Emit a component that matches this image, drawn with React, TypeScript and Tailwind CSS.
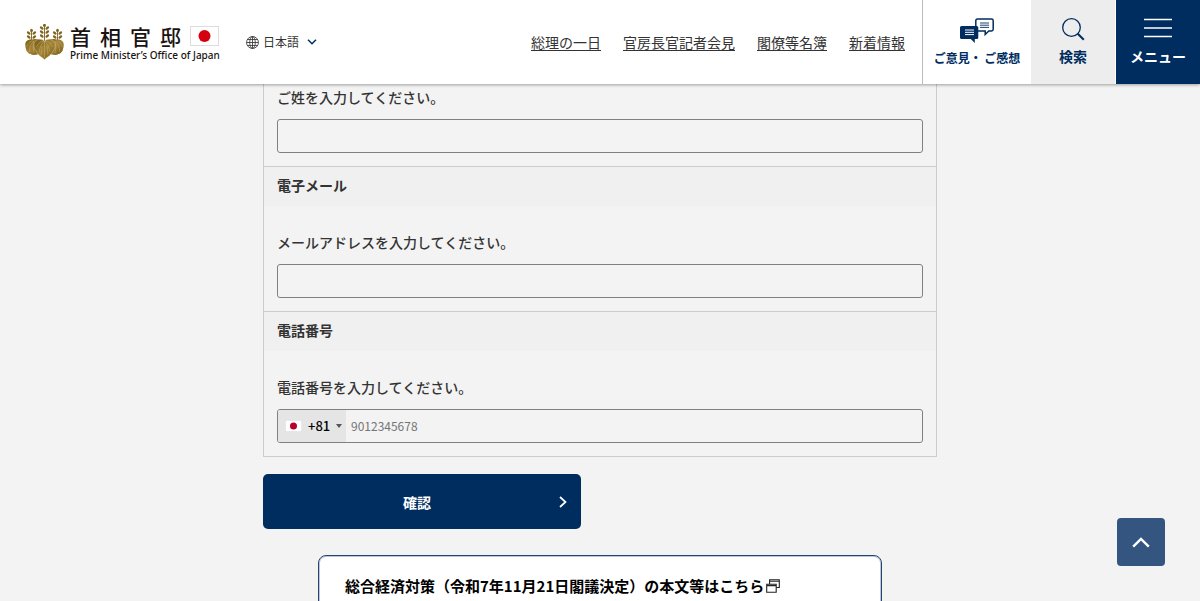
import type { ReactNode } from 'react';

const NAV_LINKS = ['総理の一日', '官房長官記者会見', '閣僚等名簿', '新着情報'];

export default function App() {
  return (
    <div className="h-screen overflow-hidden bg-[#f3f3f3] font-['Noto_Sans_CJK_JP',sans-serif] text-[#333]">
      <Header />

      <main className="px-4">
        <form className="mx-auto max-w-[674px]" onSubmit={(e) => e.preventDefault()}>
          <div className="border border-t-0 border-[#ccc]">
            <div className="px-[13px] pt-px pb-[13px]">
              <Field id="name" label="ご姓を入力してください。">
                <input id="name" type="text" className="h-[34px] w-full rounded-[3px] border border-[#808080] px-2 text-sm" />
              </Field>
            </div>

            <Section title="電子メール">
              <Field id="email" label="メールアドレスを入力してください。">
                <input id="email" type="email" className="h-[34px] w-full rounded-[3px] border border-[#808080] px-2 text-sm" />
              </Field>
            </Section>

            <Section title="電話番号">
              <Field id="tel" label="電話番号を入力してください。">
                <div className="flex h-[34px] overflow-hidden rounded-[3px] border border-[#808080]">
                  <div className="flex w-[68px] items-center bg-[#e5e5e5] pl-[7px]">
                    <Flag className="h-3 w-[17px] shrink-0" fill="#bc002d" />
                    <select
                      aria-label="国番号"
                      className="ml-1.5 w-[26px] appearance-none text-[13px] font-medium text-black"
                    >
                      <option>+81</option>
                    </select>
                    <svg viewBox="0 0 6 4" className="ml-0.5 h-1 w-1.5" fill="#555">
                      <path d="M0 0h6L3 4z" />
                    </svg>
                  </div>
                  <input
                    id="tel"
                    type="tel"
                    placeholder="9012345678"
                    className="min-w-0 flex-1 px-[5px] text-xs placeholder:text-[#757575]"
                  />
                </div>
              </Field>
            </Section>
          </div>

          <button
            type="submit"
            className="mt-[17px] grid h-[55px] w-full max-w-[318px] grid-cols-[1fr_auto_1fr] items-center rounded-[5px] bg-[#002d5f] pr-[14px] pl-1 text-sm font-bold text-white"
          >
            <span className="col-start-2">確認</span>
            <svg viewBox="0 0 8 12" className="h-3 w-2 justify-self-end" fill="none" stroke="currentColor" strokeWidth="1.7">
              <path d="M1 1l5.5 5L1 11" />
            </svg>
          </button>
        </form>

        <div className="mx-auto mt-[26px] max-w-[564px] rounded-lg border border-[#254475] bg-white px-[26px] pt-[18px] pb-6 ring-1 ring-[#254475]/30 ring-inset">
          <a href="#" className="flex items-center gap-0.5 text-[15px] leading-6 font-bold text-black">
            総合経済対策（令和7年11月21日閣議決定）の本文等はこちら
            <svg viewBox="0 0 14 14" className="h-3.5 w-3.5 shrink-0" fill="none" stroke="#222" strokeWidth="1.1">
              <path d="M3.6 5V.8h9.7v7.7h-3M3.6 2.2h9.7" />
              <path d="M.7 5.2h9.5v8H.7zM.7 6.6h9.5" />
            </svg>
          </a>
        </div>
      </main>

      <a
        href="#"
        aria-label="ページの先頭へ"
        className="fixed right-[35px] bottom-[35px] flex h-12 w-12 items-center justify-center rounded bg-[#34557f]"
      >
        <svg viewBox="0 0 18 11" className="h-[11px] w-[18px]" fill="none" stroke="#fff" strokeWidth="2.4">
          <path d="M1.2 9.7L9 2l7.8 7.7" />
        </svg>
      </a>
    </div>
  );
}

function Header() {
  return (
    <header className="relative z-10 flex h-[84px] bg-white shadow-[0_1px_3px_rgba(0,0,0,0.35)]">
      <div className="flex flex-1 items-center pl-[25px]">
        <a href="#" className="flex items-center gap-[6px]">
          <Emblem />
          <div className="w-[149px] pt-px">
            <div className="flex items-center justify-between">
              <div className="flex w-[111px] justify-between text-[21px] leading-6 font-medium text-[#1a1311]">
                <span>首</span>
                <span>相</span>
                <span>官</span>
                <span>邸</span>
              </div>
              <Flag className="h-5 w-[29px]" fill="#d7000f" />
            </div>
            <div className="mt-px font-['Noto_Sans',sans-serif] text-[10px] leading-3 font-medium whitespace-nowrap text-[#1a1311]">
              Prime Minister’s Office of Japan
            </div>
          </div>
        </a>

        <div className="ml-[27px] flex items-center">
          <svg viewBox="0 0 14 14" className="h-[13px] w-[13px]" fill="none" stroke="#333" strokeWidth="0.9">
            <circle cx="7" cy="7" r="6.4" />
            <ellipse cx="7" cy="7" rx="3" ry="6.4" />
            <path d="M7 .6v12.8M.6 7h12.8M1.5 3.8h11M1.5 10.2h11" />
          </svg>
          <select aria-label="言語" className="ml-1 w-10 appearance-none text-xs">
            <option>日本語</option>
          </select>
          <svg viewBox="0 0 10 6" className="ml-1 h-1.5 w-2.5" fill="none" stroke="#002d5f" strokeWidth="1.5">
            <path d="M1 .8l4 4 4-4" />
          </svg>
        </div>

        <nav className="mr-[17px] ml-auto flex gap-[22px] text-sm">
          {NAV_LINKS.map((label) => (
            <a key={label} href="#" className="whitespace-nowrap underline underline-offset-2">
              {label}
            </a>
          ))}
        </nav>
      </div>

      <a
        href="#"
        className="flex w-[109px] flex-col items-center border-l border-[#bbb] pt-[18px] text-xs leading-4 font-bold whitespace-nowrap text-[#002d5f]"
      >
        <svg viewBox="0 0 34 26" className="h-[26px] w-[34px]" fill="none" stroke="#002d5f">
          <path
            d="M17.5 1h14q1.7 0 1.7 1.7v8.6q0 1.7-1.7 1.7h-2.7l-3.6 3.5V13h-7.7q-1.7 0-1.7-1.7V2.7q0-1.7 1.7-1.7z"
            strokeWidth="1.5"
          />
          <path d="M20 5h9M20 7.2h9M20 9.4h9" strokeWidth="0.9" />
          <path
            d="M1.5 8h15.3q1.5 0 1.5 1.5v10q0 1.5-1.5 1.5h-2v4l-4-4H1.5Q0 21 0 19.5v-10Q0 8 1.5 8z"
            fill="#002d5f"
            stroke="none"
          />
          <path d="M5 12h9M5 14.3h9M5 16.6h9" stroke="#fff" />
        </svg>
        <span className="mt-[6px]">ご意見・ ご感想</span>
      </a>

      <button
        type="button"
        className="flex w-[84px] flex-col items-center bg-[#ededed] pt-[17px] text-sm leading-4 font-bold text-[#002d5f]"
      >
        <svg viewBox="0 0 24 24" className="h-6 w-6" fill="none" stroke="currentColor">
          <circle cx="10.5" cy="10.5" r="8.8" strokeWidth="1.3" />
          <path d="M16.8 16.8l6 6" strokeWidth="2" />
        </svg>
        <span className="mt-[7px]">検索</span>
      </button>

      <button
        type="button"
        className="flex w-[85px] flex-col items-center border-l border-white bg-[#002d5f] pt-[18px] text-sm leading-4 font-bold text-white"
      >
        <svg viewBox="0 0 28 20" className="h-5 w-7" stroke="currentColor" strokeWidth="1.5">
          <path d="M0 1.500h28M0 10h28M0 18.500h28" />
        </svg>
        <span className="mt-[10px]">メニュー</span>
      </button>
    </header>
  );
}

function Section({ title, children }: { title: string; children: ReactNode }) {
  return (
    <section className="border-t border-[#ccc]">
      <h2 className="flex h-[39px] items-center bg-[#f0f0f0] px-[13px] pb-[3px] text-sm font-bold">{title}</h2>
      <div className="px-[13px] pt-6 pb-[13px]">{children}</div>
    </section>
  );
}

function Field({ id, label, children }: { id: string; label: string; children: ReactNode }) {
  return (
    <>
      <label htmlFor={id} className="mb-2.5 block text-sm leading-6 font-medium">
        {label}
      </label>
      {children}
    </>
  );
}

function Flag({ className, fill }: { className: string; fill: string }) {
  return (
    <svg viewBox="0 0 29 20" preserveAspectRatio="none" className={className}>
      <rect x="0.5" y="0.5" width="28" height="19" fill="#fff" stroke="#ddd" />
      <circle cx="14.5" cy="10" r="6" fill={fill} />
    </svg>
  );
}

// One upright paulownia stalk: a stem with paired buds and a bud on top.
function Stalk({ x, top, bottom, pairs }: { x: number; top: number; bottom: number; pairs: number }) {
  const rows = Array.from({ length: pairs }, (_, i) => top + 4 + i * 4);
  return (
    <g>
      <path d={`M${x} ${top}V${bottom}`} stroke="#7d6220" strokeWidth="0.9" />
      <ellipse cx={x} cy={top + 1.4} rx="1.4" ry="1.7" />
      {rows.map((y) => (
        <g key={y}>
          <ellipse cx={x - 2.8} cy={y} rx="2.1" ry="1.3" transform={`rotate(35 ${x - 2.8} ${y})`} />
          <ellipse cx={x + 2.8} cy={y} rx="2.1" ry="1.3" transform={`rotate(-35 ${x + 2.8} ${y})`} />
        </g>
      ))}
    </g>
  );
}

function Emblem() {
  return (
    <svg viewBox="0 0 39 36" className="h-9 w-[39px] shrink-0" fill="#80641f">
      <defs>
        <linearGradient id="gold" x1="0" y1="0" x2="1" y2="1">
          <stop offset="0" stopColor="#745712" />
          <stop offset="0.5" stopColor="#a58639" />
          <stop offset="1" stopColor="#755811" />
        </linearGradient>
      </defs>
      <Stalk x={6.5} top={5} bottom={18} pairs={2} />
      <Stalk x={19.5} top={0} bottom={18} pairs={3} />
      <Stalk x={32.5} top={5} bottom={18} pairs={2} />
      <g fill="url(#gold)">
        <path d="M18 18C14 13.500 9 15.500 6 15.500 2 15.500 0 18 .3 21c0 3 1 4 1.200 6 1.500 1.500 2 3 4 3 2 1.500 5 1 7 .5 3-1 5-4 6-9z" />
        <path d="M21 18c4-4.500 9-2.500 12-2.500 4 0 6 2.500 5.700 5.500 0 3-1 4-1.200 6-1.500 1.500-2 3-4 3-2 1.500-5 1-7 .5-3-1-5-4-6-9z" />
        <path
          d="M19.500 17.500c2-3 7-3 9.500 0 2 3 1 6 0 8-1.500 1.500-1.500 4-3.500 5-1 2-3.500 2.500-6 5-2.500-2.500-5-3-6-5-2-1-2-3.500-3.500-5-1-2-2-5 0-8 2.500-3 7.500-3 9.500 0z"
          stroke="#e6d9ae"
          strokeWidth="0.4"
        />
      </g>
      <g fill="none" stroke="#d9c588" strokeWidth="0.35">
        <path d="M19.500 17v17M19.500 17c-3 3-5 6-5 11M19.500 17c3 3 5 6 5 11M19.500 17c-4 0-6 2-8 6M19.500 17c4 0 6 2 8 6M17 22l-1 9M22 22l1 9" />
        <path d="M9 17c-3 3-5 6-4.500 11M9 17c-1 4-1 8 0 12M8 17c-3 0-5 2-6.500 6M30 17c3 3 5 6 4.500 11M30 17c1 4 1 8 0 12M31 17c3 0 5 2 6.500 6" />
      </g>
    </svg>
  );
}
